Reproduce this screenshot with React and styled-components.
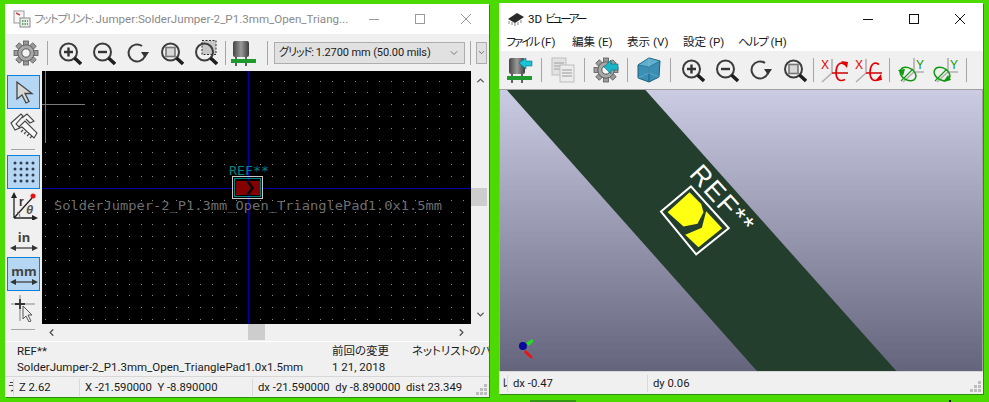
import styled, { createGlobalStyle } from "styled-components";
import { ChevronLeft, ChevronRight, ChevronUp, ChevronDown } from "lucide-react";

const GlobalStyle = createGlobalStyle`
  html, body {
    margin: 0;
    padding: 0;
    background: #4cdb00;
  }
  * {
    box-sizing: border-box;
  }
`;

const FONT = `Roboto, "Noto Sans CJK JP", sans-serif`;

const Page = styled.div`
  position: relative;
  width: 989px;
  height: 402px;
  overflow: hidden;
  display: flex;
  align-items: flex-start;
  gap: 10px;
  padding: 3px 0 0 5px;
  background: #4cdb00;
  font-family: ${FONT};
  font-size: 12px;
  font-feature-settings: "palt";
  color: #1a1a1a;
`;

const DesktopBit = styled.div`
  position: absolute;
  left: ${(p) => p.$l}px;
  top: 400px;
  width: ${(p) => p.$w}px;
  height: 2px;
  background: ${(p) => p.$bg};
`;

const Kana = styled.span`
  letter-spacing: ${(p) => p.$ls}px;
`;

const Window = styled.div`
  width: ${(p) => p.$w}px;
  height: ${(p) => p.$h}px;
  margin-top: ${(p) => p.$top || 0}px;
  display: flex;
  flex-direction: column;
  flex: none;
  background: #f0f0f0;
  overflow: hidden;
  box-shadow: 1px 1px 0 #2f8a12;
`;

const TitleBar = styled.div`
  height: ${(p) => p.$h}px;
  flex: none;
  display: flex;
  align-items: center;
  background: #fff;
  padding-left: 8px;
  color: ${(p) => (p.$inactive ? "#8a8a8a" : "#111")};
`;

const TitleText = styled.span`
  margin-left: 3px;
  flex: 1;
  white-space: nowrap;
  overflow: hidden;
  font-size: 11.6px;
  line-height: 18px;
`;

const WinButton = styled.div`
  width: 46px;
  height: 28px;
  display: flex;
  align-items: center;
  justify-content: center;
  flex: none;
`;

const MenuBar = styled.div`
  height: 17px;
  flex: none;
  display: flex;
  background: #fff;
  padding-left: 7px;
  align-items: center;
`;

const MenuItem = styled.span`
  width: ${(p) => p.$w}px;
  flex: none;
  font-size: 11.6px;
  line-height: 17px;
  white-space: nowrap;
`;

const Toolbar = styled.div`
  height: ${(p) => p.$h}px;
  flex: none;
  display: flex;
  align-items: center;
  padding-left: 4px;
  overflow: hidden;
  background: #f0f0f0;
`;

const ToolIcon = styled.div`
  width: 34px;
  height: 32px;
  flex: none;
  display: flex;
  align-items: center;
  justify-content: center;
  background: ${(p) => (p.$active ? "#b5d7f3" : "transparent")};
  border: ${(p) => (p.$active ? "1px solid #0a7fd8" : "none")};
`;

const SepV = styled.div`
  width: 1px;
  height: 24px;
  flex: none;
  margin: 0 ${(p) => p.$r ?? 4}px 0 ${(p) => p.$l ?? 4}px;
  background: #a6a6a6;
`;

const Combo = styled.div`
  width: 191px;
  height: 22px;
  flex: none;
  display: flex;
  align-items: center;
  justify-content: space-between;
  padding: 0 4px 0 4px;
  background: #e1e1e1;
  border: 1px solid #adadad;
  font-size: 11px;
  line-height: 18px;
  letter-spacing: -0.1px;
  white-space: nowrap;
`;

const SmallBox = styled.div`
  width: 11px;
  height: 22px;
  flex: none;
  display: flex;
  align-items: center;
  background: #e1e1e1;
  border: 1px solid #adadad;
`;

const MainRow = styled.div`
  height: 270px;
  flex: none;
  display: flex;
`;

const SideBar = styled.div`
  width: 37px;
  flex: none;
  display: flex;
  flex-direction: column;
  padding: 4px 0 0 2px;
`;

const SideTool = styled(ToolIcon)`
  width: 33px;
  height: ${(p) => p.$h || 34}px;
`;

const SepH = styled.div`
  width: 24px;
  height: 1px;
  flex: none;
  margin: ${(p) => p.$t}px 0 ${(p) => p.$b}px 4px;
  background: #a6a6a6;
`;

const CanvasGrid = styled.div`
  flex: 1;
  display: grid;
  grid-template-columns: 429px 18px;
  grid-template-rows: 253px 16px;
  background: #f0f0f0;
`;

const Canvas = styled.svg`
  display: block;
  background: #000;
`;

const VScroll = styled.div`
  display: flex;
  flex-direction: column;
  align-items: center;
  justify-content: space-between;
  position: relative;
  padding: 4px 0;
  color: #555;
`;

const HScroll = styled.div`
  display: flex;
  align-items: center;
  justify-content: space-between;
  position: relative;
  padding: 0 4px;
  color: #555;
`;

const Thumb = styled.div`
  position: absolute;
  background: #cdcdcd;
  left: ${(p) => p.$l}px;
  top: ${(p) => p.$t}px;
  width: ${(p) => p.$w}px;
  height: ${(p) => p.$h}px;
`;

const InfoPanel = styled.div`
  height: 35px;
  flex: none;
  display: grid;
  grid-template-columns: 315px 80px 77px;
  padding: 1px 0 0 12px;
  font-size: 11.5px;
  white-space: nowrap;
  overflow: hidden;
  border-top: 1px solid #fff;
`;

const InfoCol = styled.div`
  display: flex;
  flex-direction: column;
  overflow: hidden;
  line-height: 16px;
`;

const StatusBar = styled.div`
  flex: 1;
  display: flex;
  align-items: center;
  position: relative;
  background: #f0f0f0;
  border-top: 1px solid #d7d7d7;
  font-size: 11.3px;
  white-space: nowrap;
`;

const StatusCell = styled.div`
  width: ${(p) => p.$w}px;
  height: 17px;
  flex: none;
  padding-left: ${(p) => p.$pad ?? 5}px;
  line-height: 17px;
  overflow: hidden;
  border-right: ${(p) => (p.$noLine ? "none" : "1px solid #d9d9d9")};
`;

const Grip = styled.svg`
  position: absolute;
  right: 2px;
  bottom: 2px;
`;

const View3D = styled.svg`
  display: block;
  flex: none;
  background: linear-gradient(#cbcbe3, #64647c);
  border-top: 1px solid #a0a0a0;
  border-left: 1px solid #a0a0a0;
  border-right: 1px solid #a0a0a0;
`;

const Gear = ({ arrow }) => (
  <svg width="26" height="26" viewBox="0 0 26 26">
    {[0, 45, 90, 135, 180, 225, 270, 315].map((a) => (
      <rect key={a} x="10.5" y="1" width="5" height="5" fill="#9a9a9a" stroke="#5c5c5c" strokeWidth="0.8" transform={`rotate(${a} 13 13)`} />
    ))}
    <circle cx="13" cy="13" r="8.2" fill="#a8a8a8" stroke="#5f5f5f" />
    <circle cx="13" cy="13" r="4.2" fill="#f4f4f4" stroke="#555" />
    {arrow && <path d="M25 7v6h-7v4l-7-7 7-7v4z" fill="#19b6c8" stroke="#0c6a76" strokeWidth="0.6" />}
  </svg>
);

const Lens = ({ kind }) => (
  <svg width="26" height="26" viewBox="0 0 26 26">
    {kind === "area" && <rect x="10" y="0.500" width="14" height="14" fill="#c8c8c8" stroke="#333" strokeDasharray="2 1.5" />}
    <circle cx="12.500" cy="12" r="8.500" fill="none" stroke="#3c3c3c" strokeWidth="2" />
    <path d="M18.500 18l6.500 6" stroke="#1e1e1e" strokeWidth="3.4" />
    {kind === "plus" && <path d="M12.500 7.500v9M8 12h9" stroke="#333" strokeWidth="2.4" />}
    {kind === "minus" && <path d="M8 12h9" stroke="#333" strokeWidth="2.4" />}
    {kind === "fit" && <rect x="8" y="7.500" width="9" height="9" fill="#d8d8d8" stroke="#777" strokeWidth="1.6" />}
  </svg>
);

const Redraw = () => (
  <svg width="26" height="26" viewBox="0 0 26 26">
    <path d="M21 16a8.5 8.5 0 1 1-3-10" fill="none" stroke="#3c3c3c" strokeWidth="2" />
    <path d="M17 12h8l-4 6z" fill="#333" />
  </svg>
);

const Chip = ({ arrow }) => (
  <svg width="28" height="28" viewBox="0 0 28 28">
    <defs>
      <linearGradient id={arrow ? "capA" : "capB"} x1="0" x2="1">
        <stop offset="0" stopColor="#444" />
        <stop offset="0.5" stopColor="#9a9a9a" />
        <stop offset="1" stopColor="#3c3c3c" />
      </linearGradient>
    </defs>
    <rect x="3" y="2" width="16" height="16" rx="2" fill={`url(#${arrow ? "capA" : "capB"})`} />
    <path d="M6 18v9M16 18v9" stroke="#222" strokeWidth="1.4" />
    <rect x="1" y="20" width="25" height="4" fill="#1f9a2e" />
    {arrow && <path d="M13 7l7-5v3h6v5h-6v3z" fill="#18c4d6" stroke="#0b7380" strokeWidth="0.6" />}
  </svg>
);

const CopyIcon = () => (
  <svg width="26" height="26" viewBox="0 0 26 26">
    <rect x="2" y="1" width="14" height="17" fill="#e2e2e2" stroke="#bdbdbd" />
    <path d="M4 6h10M4 9h10M4 12h10" stroke="#b5b5b5" strokeWidth="1.4" />
    <rect x="10" y="8" width="14" height="17" fill="#ececec" stroke="#bdbdbd" />
    <path d="M12 13h10M12 16h10M12 19h10" stroke="#b5b5b5" strokeWidth="1.4" />
  </svg>
);

const Cube = () => (
  <svg width="24" height="26" viewBox="0 0 24 26">
    <path d="M1 8L12 1l11 3-1 16-10 5-11-4z" fill="#3b8fb4" stroke="#1c5f7e" />
    <path d="M1 8L12 1l11 3-11 6z" fill="#5fb0cf" stroke="#1c5f7e" strokeWidth="0.6" />
    <path d="M12 10v15" stroke="#1c5f7e" />
    <path d="M12 1v15M1 21l11-5 10 4" fill="none" stroke="#7dbfd8" strokeWidth="0.5" />
  </svg>
);

const RotX = ({ flip }) => (
  <svg width="28" height="26" viewBox="0 0 28 26">
    <path d="M11 2v14M1 25l10-9h16" fill="none" stroke="#b0b0b0" strokeWidth="1.6" />
    <text x="0" y="12" fontFamily="Liberation Sans, sans-serif" fontSize="12" fill="#e00000">X</text>
    <path d="M24 7.5c-6-4-9 2-9 8s3 10 9 7" fill="none" stroke="#e00000" strokeWidth="1.6" />
    <path d="M11 16h16" stroke="#e00000" strokeWidth="1.4" />
    <path d={flip ? "M20 24l7-1-1-6z" : "M20 4l7 1-1 6z"} fill="#e00000" />
  </svg>
);

const RotY = ({ flip }) => (
  <svg width="28" height="26" viewBox="0 0 28 26">
    <path d="M17 1v14M6 25l11-10h10" fill="none" stroke="#b0b0b0" strokeWidth="1.6" />
    <text x="19" y="12" fontFamily="Liberation Sans, sans-serif" fontSize="12" fill="#119911">Y</text>
    <ellipse cx="11" cy="17" rx="8.500" ry="6" fill="none" stroke="#119911" strokeWidth="1.5" transform="rotate(30 11 17)" />
    <path d={flip ? "M12 25l8-2-3-5z" : "M1 13l7-1-2 7z"} fill="#119911" />
    <path d="M4 24L16 12" stroke="#119911" strokeWidth="1.100" />
  </svg>
);

const ArrowTool = () => (
  <svg width="24" height="26" viewBox="0 0 24 26">
    <path d="M5 3v17l5-4 4 8 3-1.500-4-8h7z" fill="#d8d8d8" stroke="#444" strokeWidth="1.3" />
  </svg>
);

const Caliper = () => (
  <svg width="28" height="26" viewBox="0 0 28 26">
    <path d="M1 10L11 1l2 2-7 8 3 3 6-6 12 12-3 5-12-11-7 3z" fill="#f7f7f7" stroke="#444" strokeWidth="1.1" />
    <path d="M12 5l5-4 7 7-4 2-4-4" fill="#f7f7f7" stroke="#444" strokeWidth="1.1" />
    <path d="M13 17l-2 2M16 19l-2 2M19 21l-2 2M22 23l-2 2" stroke="#444" strokeWidth="1.1" />
  </svg>
);

const GridTool = () => (
  <svg width="24" height="24" viewBox="0 0 24 24">
    {[3, 9, 15, 21].flatMap((y) =>
      [3, 9, 15, 21].map((x) => <circle key={`${x}-${y}`} cx={x} cy={y} r="1.5" fill="#2e3f4f" />)
    )}
  </svg>
);

const PolarTool = () => (
  <svg width="28" height="28" viewBox="0 0 28 28">
    <path d="M4 26V4M4 26h22M4 26L22 6" fill="none" stroke="#222" strokeWidth="1.3" />
    <path d="M4 0l-3 6h6zM28 26l-6-3v6z" fill="#222" />
    <path d="M10 26c0-3-1-5-3-6" fill="none" stroke="#777" />
    <circle cx="23" cy="4" r="2.500" fill="#ee1111" />
    <text x="9" y="14" fontFamily="Liberation Sans, sans-serif" fontWeight="700" fontSize="12" fill="#333">r</text>
    <text x="16" y="22" fontFamily="Liberation Sans, sans-serif" fontStyle="italic" fontWeight="700" fontSize="13" fill="#555">θ</text>
  </svg>
);

const UnitTool = ({ label }) => (
  <svg width="30" height="28" viewBox="0 0 30 28">
    <text x="15" y="16" textAnchor="middle" fontFamily="Noto Sans, sans-serif" fontWeight="700" fontSize="13" fill="#444">{label}</text>
    <path d="M4 22h22" stroke="#333" strokeWidth="1.2" />
    <path d="M1 22l6-3v6zM29 22l-6-3v6z" fill="#333" />
  </svg>
);

const CursorTool = () => (
  <svg width="28" height="28" viewBox="0 0 28 28">
    <path d="M10 1v26M1 10h24" stroke="#aaa" strokeWidth="1.6" />
    <path d="M10 5v10M5 10h10" stroke="#333" strokeWidth="1.8" />
    <path d="M13 12v13l3-3 3 6 2-1-3-6h4z" fill="#eee" stroke="#555" />
  </svg>
);

const WinIcon = ({ kind, color }) => (
  <svg width="12" height="12" viewBox="0 0 12 12" fill="none" stroke={color}>
    {kind === "min" && <path d="M1 6.500h10" />}
    {kind === "max" && <rect x="1.500" y="1.500" width="9" height="9" />}
    {kind === "close" && <path d="M1 1l10 10M11 1L1 11" />}
  </svg>
);

const PcbLogo = () => (
  <svg width="18" height="18" viewBox="0 0 18 18">
    <rect x="1" y="1" width="10" height="12" fill="#f6f6f6" stroke="#999" />
    <path d="M3 3l4 2" stroke="#c44" strokeWidth="1.5" />
    <rect x="7" y="8" width="10" height="9" fill="#eee" stroke="#888" />
    <path d="M9 11h6M9 14h6" stroke="#2a9a3a" strokeWidth="1.6" strokeDasharray="1.500 1" />
  </svg>
);

const ChipLogo = () => (
  <svg width="18" height="16" viewBox="0 0 18 16">
    <path d="M1 8l9-6 7 4-9 6z" fill="#2a2a2a" />
    <path d="M2 10v3M5 11v3M8 12v3M11 11v3M14 9v3" stroke="#888" />
  </svg>
);

const GripMark = () => (
  <Grip width="11" height="11" viewBox="0 0 11 11">
    {[[8, 0], [4, 4], [8, 4], [0, 8], [4, 8], [8, 8]].map(([x, y]) => (
      <rect key={`${x}-${y}`} x={x} y={y} width="3" height="3" fill="#bdbdbd" />
    ))}
  </Grip>
);

const dotsX = Array.from({ length: 37 }, (_, i) => Math.round(248 + (i - 17) * 11.94));
const dotsY = Array.from({ length: 22 }, (_, i) => Math.round(188 + (i - 10) * 11.94));

const BoardCanvas = () => (
  <Canvas width="429" height="253" viewBox="42 71 429 253">
    {dotsY.flatMap((y) =>
      dotsX.map((x) => <rect key={`${x}-${y}`} x={x} y={y} width="1" height="1" fill="#8c8c8c" />)
    )}
    <path d="M248.500 71v253M42 188.500h429" stroke="#0000a8" strokeWidth="1" />
    <path d="M45.500 71v72M42 104.500h43" stroke="#7a7a7a" strokeWidth="1" />
    <text x="54" y="210" fontFamily="DejaVu Sans Mono, monospace" fontSize="13" textLength="388" lengthAdjust="spacingAndGlyphs" fill="#6e6e6e">
      SolderJumper-2_P1.3mm_Open_TrianglePad1.0x1.5mm
    </text>
    <text x="229" y="175" fontFamily="DejaVu Sans Mono, monospace" fontSize="12" textLength="40" lengthAdjust="spacingAndGlyphs" fill="#008484">
      REF**
    </text>
    <rect x="232.500" y="176.500" width="30" height="22" fill="none" stroke="#c8c8c8" />
    <rect x="234.500" y="178.500" width="26" height="18" fill="none" stroke="#008484" />
    <rect x="236" y="181" width="24" height="14" fill="#840000" />
    <path d="M247.500 181l5 7-5 7" fill="none" stroke="#000" strokeWidth="2.400" />
  </Canvas>
);

const Scene3D = () => (
  <View3D width="484" height="282" viewBox="499 89 484 282">
    <path d="M506 89H645L897 371H757L506 89z" fill="#243e2d" />
    <path d="M660.700 211L690.700 185.700 728.700 227.700 696 254z" fill="#243e2d" stroke="#fff" strokeWidth="2" />
    <path d="M667.300 211.700L689.300 191.700 701 203.300 703.300 211.700 697.300 223.300 683.300 226z" fill="#ffff12" />
    <path d="M685 234.300L701.700 227.300 706 210.700 722 227.700 698.300 246.700z" fill="#ffff12" />
    <text x="688" y="174" transform="rotate(48 688 174)" fontFamily="Liberation Sans, sans-serif" fontSize="27" letterSpacing="1.500" fill="#fff">REF**</text>
    <circle cx="522" cy="346" r="4" fill="#0a0a9a" />
    <path d="M525 343l6-4 2 2-5 5z" fill="#22dd22" />
    <path d="M525 350l6 6 1 3-4-2-5-5z" fill="#ee1111" />
  </View3D>
);

export default function App() {
  return (
    <Page>
      <GlobalStyle />
      <Window $w={484} $h={393} $top={1}>
        <TitleBar $h={30} $inactive>
          <PcbLogo />
          <TitleText><Kana $ls={-1.4}>フットプリント:</Kana> Jumper:SolderJumper-2_P1.3mm_Open_Triang...</TitleText>
          <WinButton><WinIcon kind="min" color="#999" /></WinButton>
          <WinButton><WinIcon kind="max" color="#999" /></WinButton>
          <WinButton><WinIcon kind="close" color="#999" /></WinButton>
        </TitleBar>
        <Toolbar $h={37}>
          <ToolIcon><Gear /></ToolIcon>
          <SepV />
          <ToolIcon><Lens kind="plus" /></ToolIcon>
          <ToolIcon><Lens kind="minus" /></ToolIcon>
          <ToolIcon><Redraw /></ToolIcon>
          <ToolIcon><Lens kind="fit" /></ToolIcon>
          <ToolIcon><Lens kind="area" /></ToolIcon>
          <SepV $l={3} $r={1} />
          <ToolIcon><Chip /></ToolIcon>
          <SepV $l={6} $r={6} />
          <Combo>
            <span><Kana $ls={-1}>グリッド:</Kana> 1.2700 mm (50.00 mils)</span>
            <ChevronDown size={12} strokeWidth={1.5} color="#555" />
          </Combo>
          <SepV $l={5} $r={5} />
          <SmallBox><ChevronDown size={9} color="#555" /></SmallBox>
        </Toolbar>
        <MainRow>
          <SideBar>
            <SideTool $active><ArrowTool /></SideTool>
            <SideTool><Caliper /></SideTool>
            <SepH $t={6} $b={5} />
            <SideTool $active><GridTool /></SideTool>
            <SideTool><PolarTool /></SideTool>
            <SideTool><UnitTool label="in" /></SideTool>
            <SideTool $active><UnitTool label="mm" /></SideTool>
            <SideTool><CursorTool /></SideTool>
            <SepH $t={4} $b={0} />
          </SideBar>
          <CanvasGrid>
            <BoardCanvas />
            <VScroll>
              <ChevronUp size={11} strokeWidth={3} />
              <Thumb $l={0} $t={117} $w={16} $h={18} />
              <ChevronDown size={11} strokeWidth={3} />
            </VScroll>
            <HScroll>
              <ChevronLeft size={11} strokeWidth={3} />
              <Thumb $l={206} $t={0} $w={17} $h={16} />
              <ChevronRight size={11} strokeWidth={3} />
            </HScroll>
          </CanvasGrid>
        </MainRow>
        <InfoPanel>
          <InfoCol>
            <span>REF**</span>
            <span>SolderJumper-2_P1.3mm_Open_TrianglePad1.0x1.5mm</span>
          </InfoCol>
          <InfoCol>
            <span>前回の変更</span>
            <span>1 21, 2018</span>
          </InfoCol>
          <InfoCol>
            <span>ネットリストのパス</span>
          </InfoCol>
        </InfoPanel>
        <StatusBar>
          <StatusCell $w={9} $pad={3}>ラ</StatusCell>
          <StatusCell $w={66}>Z 2.62</StatusCell>
          <StatusCell $w={173}>X -21.590000&nbsp; Y -8.890000</StatusCell>
          <StatusCell $w={230} $noLine>dx -21.590000&nbsp; dy -8.890000&nbsp; dist 23.349</StatusCell>
          <GripMark />
        </StatusBar>
      </Window>
      <Window $w={484} $h={391}>
        <TitleBar $h={31}>
          <ChipLogo />
          <TitleText>3D <Kana $ls={-2.6}>ビューアー</Kana></TitleText>
          <WinButton><WinIcon kind="min" color="#111" /></WinButton>
          <WinButton><WinIcon kind="max" color="#111" /></WinButton>
          <WinButton><WinIcon kind="close" color="#111" /></WinButton>
        </TitleBar>
        <MenuBar>
          <MenuItem $w={66}><Kana $ls={-2}>ファイル</Kana> (F)</MenuItem>
          <MenuItem $w={55}>編集 (E)</MenuItem>
          <MenuItem $w={56}>表示 (V)</MenuItem>
          <MenuItem $w={55}>設定 (P)</MenuItem>
          <MenuItem $w={70}><Kana $ls={-1.2}>ヘルプ</Kana> (H)</MenuItem>
        </MenuBar>
        <Toolbar $h={38}>
          <ToolIcon><Chip arrow /></ToolIcon>
          <SepV />
          <ToolIcon><CopyIcon /></ToolIcon>
          <SepV />
          <ToolIcon><Gear arrow /></ToolIcon>
          <SepV />
          <ToolIcon><Cube /></ToolIcon>
          <SepV />
          <ToolIcon><Lens kind="plus" /></ToolIcon>
          <ToolIcon><Lens kind="minus" /></ToolIcon>
          <ToolIcon><Redraw /></ToolIcon>
          <ToolIcon><Lens kind="fit" /></ToolIcon>
          <SepV $l={2} $r={4} />
          <ToolIcon><RotX /></ToolIcon>
          <ToolIcon><RotX flip /></ToolIcon>
          <SepV $l={3} $r={4} />
          <ToolIcon><RotY /></ToolIcon>
          <ToolIcon><RotY flip /></ToolIcon>
          <SepV $l={4} />
        </Toolbar>
        <Scene3D />
        <StatusBar>
          <StatusCell $w={9} $pad={3}>レ</StatusCell>
          <StatusCell $w={140}>dx -0.47</StatusCell>
          <StatusCell $w={200} $noLine>dy 0.06</StatusCell>
          <GripMark />
        </StatusBar>
      </Window>
      <DesktopBit $l={530} $w={46} $bg="#2f9a12" />
      <DesktopBit $l={949} $w={2} $bg="#111" />
    </Page>
  );
}
